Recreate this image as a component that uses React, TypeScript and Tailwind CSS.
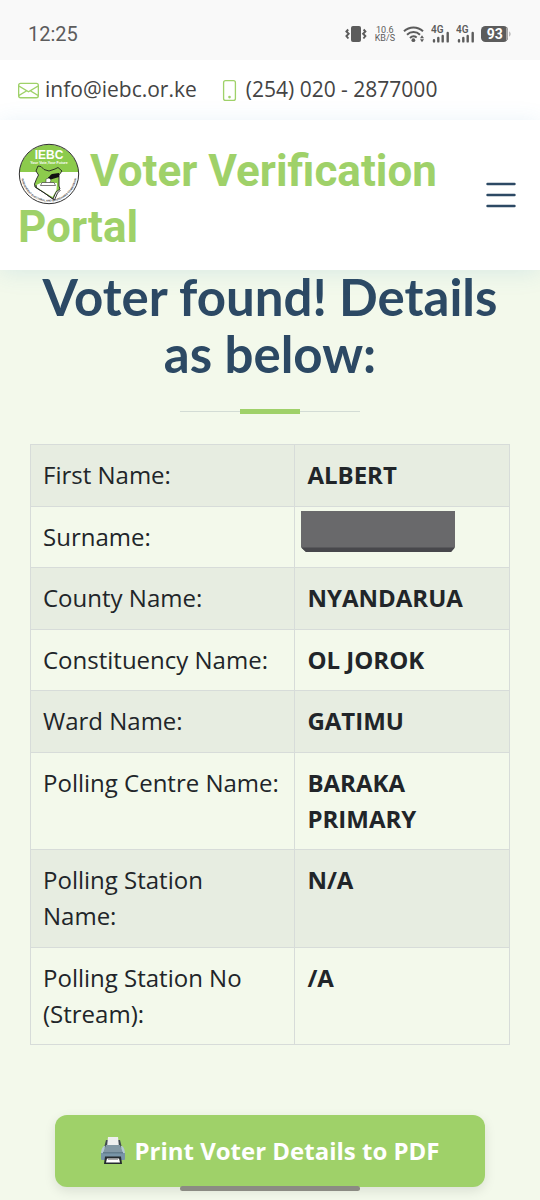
import { BsEnvelope, BsPhone } from "react-icons/bs";

const details = [
  { label: "First Name:", value: "ALBERT" },
  { label: "Surname:", value: null },
  { label: "County Name:", value: "NYANDARUA" },
  { label: "Constituency Name:", value: "OL JOROK" },
  { label: "Ward Name:", value: "GATIMU" },
  { label: "Polling Centre Name:", value: "BARAKA PRIMARY" },
  { label: "Polling Station Name:", value: "N/A" },
  { label: "Polling Station No (Stream):", value: "/A" },
];

function VibrateIcon() {
  return (
    <svg width="22" height="18" viewBox="0 0 22 18" fill="none" stroke="#5c5c5c" aria-hidden="true">
      <rect x="6" y="1" width="10" height="16" rx="2" fill="#5c5c5c" stroke="none" />
      <path d="M3.2 4.5 1.4 6.5 3.7 8.7 1.4 11 3.4 13.5M18.6 4.5l1.8 2-2.3 2.2 2.3 2.3-2 2.5" strokeWidth="1.9" />
    </svg>
  );
}

function WifiIcon() {
  return (
    <svg width="22" height="18" viewBox="0 0 22 18" fill="none" stroke="#5c5c5c" strokeWidth="2" aria-hidden="true">
      <path d="M1 6.2a13.8 13.8 0 0 1 19 0M4 9.7a9.4 9.4 0 0 1 13 0M7 13a5.2 5.2 0 0 1 6.7-.5" />
      <circle cx="10.4" cy="15.2" r="1.9" fill="#5c5c5c" stroke="none" />
      <path d="m17 13.2 2-3 2 3zM17 14.2l2 3 2-3z" fill="#5c5c5c" stroke="none" />
    </svg>
  );
}

function SignalIcon() {
  return (
    <svg width="19" height="19" viewBox="0 0 19 19" aria-hidden="true">
      <text x="0" y="8" fontSize="10" fontWeight="600" fontFamily="Roboto, sans-serif" fill="#5c5c5c">
        4G
      </text>
      <path
        d="M3 15.2v1.2M7.3 13v3.4M11.7 11v5.4M16.7 8v8.4"
        stroke="#5c5c5c"
        strokeWidth="2.4"
        strokeLinecap="round"
      />
    </svg>
  );
}

function BatteryIcon() {
  return (
    <svg width="31" height="16" viewBox="0 0 31 16" role="img" aria-label="Battery 93 percent">
      <rect x="0" y="0" width="27" height="16" rx="4.5" fill="#5c5c5c" />
      <path d="M25 1.2v13.6a4 4 0 0 0 2-3V4a4 4 0 0 0-2-2.8z" fill="#a5a5a5" />
      <path d="M28.3 5.5c1.6.4 1.6 4.6 0 5z" fill="#a5a5a5" />
      <text x="13.7" y="12.8" textAnchor="middle" fontSize="14" fontWeight="700" fontFamily="Roboto, sans-serif" fill="#fff">
        93
      </text>
    </svg>
  );
}

function Logo() {
  return (
    <svg
      className="-my-2 mr-2.5 inline-block align-middle"
      width="62"
      height="62"
      viewBox="0 0 62 62"
      fontFamily="'Liberation Sans', Arial, sans-serif"
      role="img"
      aria-label="IEBC"
    >
      <defs>
        <path id="ring" d="M3.2 31a27.8 27.6 0 0 0 55.6 0" />
      </defs>
      <circle cx="31" cy="31" r="29.7" fill="#fff" />
      <path d="M1.4 29a29.7 29.7 0 0 1 59.2 0z" fill="#8ccb4c" />
      <circle cx="31" cy="31" r="29.7" fill="none" stroke="#303030" strokeWidth="1" />
      <text x="31" y="16" textAnchor="middle" fontSize="12" fontWeight="700" fill="#fff">
        IEBC
      </text>
      <text x="31" y="21" textAnchor="middle" fontSize="3.6" fontWeight="700" fill="#fff">
        Your Vote,Your Future
      </text>
      <path
        d="M20 23l3 .5 3 3 5 1.5 6-2 3-1.5 4 3.5-3 4v11l1 3-4 3-3 7-3-2-7-5-8-5-.5-3 2-5 2-4-2.5-4z"
        fill="#8ccb4c"
        stroke="#222"
        strokeWidth=".9"
        strokeLinejoin="round"
      />
      <path d="M18.5 42l4-2h14l2.500 0-.5 7-4 7-7-4-9-6z" fill="#fff" />
      <path d="M18 42l.5 3 8 5 7 5 3 2 3-7 3-3" fill="none" stroke="#222" strokeWidth=".9" />
      <path d="M22.500 42.500l1.500-3h12l1.500 3z" fill="#fff" stroke="#444" strokeWidth=".7" />
      <path d="M30 34.500c2-1 2-2.500 4-3.500l7-1v4l-5 1.500-3 1h-3z" fill="#111" />
      <path d="M28 36l3-1 2 2-1 2.500h-4z" fill="#fff" stroke="#333" strokeWidth=".5" />
      <text fontSize="2.6" fontWeight="700" fill="#333">
        <textPath href="#ring" startOffset="50%" textAnchor="middle">
          INDEPENDENT ELECTORAL AND BOUNDARIES COMMISSION
        </textPath>
      </text>
    </svg>
  );
}

function PrinterIcon() {
  return (
    <svg className="shrink-0" width="26" height="30" viewBox="0 0 26 30" aria-hidden="true">
      <path d="M6 4h14l2 8H4z" fill="#414b50" />
      <path d="M8 1h10l1 10H7z" fill="#eeeff0" />
      <path d="M4 10C1 12 1 17 1 20l3-1 1-9zM22 10c3 2 3 7 3 10l-3-1-1-9z" fill="#b3c9d5" />
      <path d="M6 9h14l3 8H3z" fill="#8298a5" />
      <path d="M1 17h24v6q0 1-1 1H2q-1 0-1-1z" fill="#7895a8" />
      <path d="M3 16h20v1.500H3z" fill="#637d8d" />
      <path d="M5 20.500h16l1 7.500H4z" fill="#252b2e" />
      <path d="M7 22.500h12l1 4H6z" fill="#fff" />
      <path d="M8 23.500h10" stroke="#aaa" />
    </svg>
  );
}

export default function App() {
  return (
    <div className="min-h-screen bg-[#f3f9eb] font-['Open_Sans',sans-serif] text-[#212529]">
      <div className="flex h-15 items-center justify-between bg-[#f9f9f9] pt-2 pr-7 pl-7 font-[Roboto,sans-serif] text-[#5c5c5c]">
        <span className="text-xl">12:25</span>
        <div className="flex items-center gap-1.5">
          <VibrateIcon />
          <span className="mx-0.5 text-center text-[9px] leading-2">
            10.6
            <br />
            KB/S
          </span>
          <WifiIcon />
          <SignalIcon />
          <SignalIcon />
          <BatteryIcon />
        </div>
      </div>

      <div className="flex h-15 items-center gap-[22px] bg-white px-[18px] text-[21px] text-[#444]">
        <a href="mailto:info@iebc.or.ke" className="flex items-center gap-1.5">
          <BsEnvelope className="size-[21px] text-[#9fd169]" />
          info@iebc.or.ke
        </a>
        <a href="tel:+254202877000" className="flex items-center gap-1.5">
          <BsPhone className="size-[21px] text-[#9fd169]" />
          (254) 020 - 2877000
        </a>
      </div>

      <header className="relative flex items-center justify-between gap-4 bg-white pr-6 pl-[18px] shadow-[0_3px_22px_rgba(55,140,190,0.13)]">
        <h1 className="pt-[23px] pb-[15px] font-[Roboto,sans-serif] text-[44px] leading-14 font-bold text-[#9fd169]">
          <a href="#">
            <Logo />
            Voter Verification Portal
          </a>
        </h1>
        <button type="button" aria-label="Open menu" className="shrink-0">
          <svg width="30" height="26" viewBox="0 0 30 26" stroke="#2c4964" strokeWidth="2.4" strokeLinecap="round">
            <path d="M1.500 2h27M1.500 13h27M1.500 24h27" />
          </svg>
        </button>
      </header>

      <main className="px-[30px] pb-3">
        <h2 className="-mt-0.5 text-center font-[Lato,sans-serif] text-[51px] leading-[57px] font-bold text-[#2c4964]">
          Voter found! Details as below:
        </h2>
        <div className="mx-auto mt-[27px] flex w-[180px] items-center">
          <span className="h-px flex-1 bg-[#d3dcd5]" />
          <span className="h-[5px] w-15 bg-[#9fd169]" />
          <span className="h-px flex-1 bg-[#d3dcd5]" />
        </div>

        <table className="mt-[30px] w-full table-fixed border-collapse text-left text-2xl leading-9">
          <colgroup>
            <col className="w-[55.2%]" />
            <col />
          </colgroup>
          <tbody>
            {details.map(({ label, value }) => (
              <tr key={label} className="odd:bg-[#e7ede1] odd:[&>*]:pb-[13px]">
                <th scope="row" className="border border-[#d7dcd9] p-3 align-top font-normal">
                  {label}
                </th>
                <td className="border border-[#d7dcd9] p-3 align-top font-bold">
                  {value ?? (
                    <svg
                      className="-mx-1.5 -my-2 block"
                      width="154"
                      height="41"
                      viewBox="0 0 154 41"
                      role="img"
                      aria-label="Hidden"
                    >
                      <path d="M0 0h154v36l-4 5H5l-5-5z" fill="#69696b" />
                      <path d="M0 36.500h154l-4 4.500H5z" fill="#48484c" />
                    </svg>
                  )}
                </td>
              </tr>
            ))}
          </tbody>
        </table>

        <div className="mt-[70px] px-[25px]">
          <button
            type="button"
            className="flex h-18 w-full items-center justify-center gap-2 rounded-xl bg-[#9fd169] text-2xl font-bold text-white shadow-[0_4px_12px_rgba(0,0,0,0.1)]"
          >
            <PrinterIcon />
            Print Voter Details to PDF
          </button>
        </div>
      </main>

      <div className="fixed inset-x-0 bottom-[9px] mx-auto h-[5px] w-1/3 rounded-full bg-[#8b8b83]" />
    </div>
  );
}
